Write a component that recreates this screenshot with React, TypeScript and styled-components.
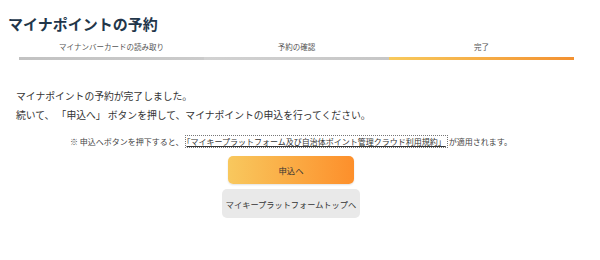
import React from "react";
import styled, { createGlobalStyle } from "styled-components";

const GlobalStyle = createGlobalStyle`
  body {
    margin: 0;
    background: #fff;
    color: #333;
    font-family: "Noto Sans CJK JP", "Noto Sans", sans-serif;
  }
`;

const Page = styled.div`
  padding: 0 26px 0 8px;
`;

const Title = styled.h1`
  margin: 14px 0 0;
  font-size: 15px;
  line-height: 20px;
  font-weight: 700;
  color: #22364a;
`;

const Steps = styled.ol`
  display: grid;
  grid-template-columns: repeat(3, 1fr);
  margin: 8px 0 0 11px;
  padding: 0;
  list-style: none;
`;

type StepProps = { $bar: string };

const Step = styled.li<StepProps>`
  display: flex;
  flex-direction: column;
  align-items: center;

  span {
    font-size: 7.5px;
    line-height: 10px;
    color: #555;
  }

  &::after {
    content: "";
    align-self: stretch;
    height: 3px;
    margin-top: 5px;
    background: ${(p) => p.$bar};
  }
`;

const Message = styled.div`
  margin: 27px 0 0 8px;

  p {
    margin: 0;
    font-size: 9.8px;
    line-height: 19px;
    color: #333;
  }
`;

const Note = styled.p`
  margin: 11px 0 0;
  text-align: center;
  font-size: 8px;
  line-height: 12px;
  color: #444;
`;

const TermsLink = styled.a`
  color: #333;
  text-decoration: underline;
  outline: 1px dotted #777;
  padding: 0 1px;
  margin: 0 2px;
`;

const Actions = styled.div`
  display: flex;
  flex-direction: column;
  align-items: center;
  gap: 5px;
  margin-top: 8px;
`;

type ButtonProps = { $primary?: boolean };

const Button = styled.button<ButtonProps>`
  display: flex;
  align-items: center;
  justify-content: center;
  width: ${(p) => (p.$primary ? "126px" : "138px")};
  height: ${(p) => (p.$primary ? "28px" : "29px")};
  padding: 0;
  border: none;
  border-radius: 5px;
  font-family: inherit;
  font-size: ${(p) => (p.$primary ? "8.3px" : "8.2px")};
  color: #333;
  background: ${(p) =>
    p.$primary ? "linear-gradient(90deg, #f8c85e, #fd8f2b)" : "#e9e9e9"};
  box-shadow: ${(p) => (p.$primary ? "0 1px 2px rgba(0,0,0,0.12)" : "none")};
`;

export default function App() {
  return (
    <Page>
      <GlobalStyle />
      <Title>マイナポイントの予約</Title>
      <Steps>
        <Step $bar="linear-gradient(90deg, #c2c2c2, #cbcbcb)">
          <span>マイナンバーカードの読み取り</span>
        </Step>
        <Step $bar="linear-gradient(90deg, #d2d2d2, #c6c6c6)">
          <span>予約の確認</span>
        </Step>
        <Step $bar="linear-gradient(90deg, #f8ca5c, #f39131)">
          <span>完了</span>
        </Step>
      </Steps>
      <Message>
        <p>マイナポイントの予約が完了しました。</p>
        <p>続いて、 「申込へ」 ボタンを押して、マイナポイントの申込を行ってください。</p>
      </Message>
      <Note>
        ※ 申込へボタンを押下すると、
        <TermsLink href="#">「マイキープラットフォーム及び自治体ポイント管理クラウド利用規約」</TermsLink>
        が適用されます。
      </Note>
      <Actions>
        <Button $primary>申込へ</Button>
        <Button>マイキープラットフォームトップへ</Button>
      </Actions>
    </Page>
  );
}
